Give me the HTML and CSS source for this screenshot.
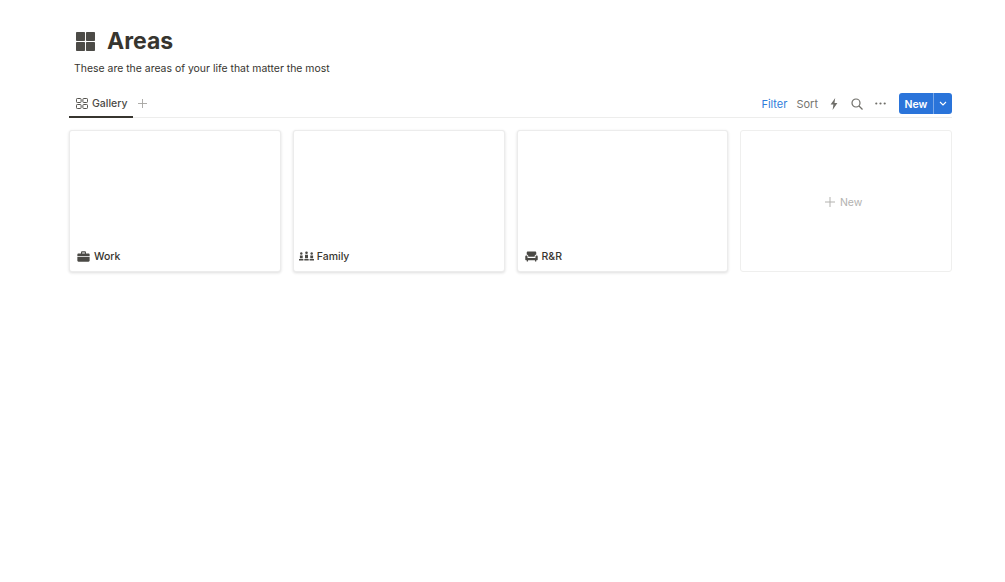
FILE: index.html
```html
<!DOCTYPE html>
<html lang="en">
<head>
<meta charset="utf-8">
<title>Areas</title>
<link rel="stylesheet" href="styles.css">
</head>
<body>
<main class="page">
  <header class="head">
    <svg class="head-icon" viewBox="0 0 20 20"><path d="M.8 0h7.900c.4 0 .8.4.8.8v7.900c0 .4-.4.8-.8.8H.8c-.4 0-.8-.4-.8-.8V.8C0 .4.400 0 .8 0zM11.300 0h7.900c.4 0 .8.4.8.8v7.900c0 .4-.4.8-.8.8h-7.900c-.4 0-.8-.4-.8-.8V.8c0-.4.400-.8.800-.8zM.8 10.500h7.900c.4 0 .8.4.8.8v7.900c0 .4-.4.8-.8.8H.8c-.4 0-.8-.4-.8-.8v-7.900c0-.4.400-.8.800-.8zM11.300 10.500h7.900c.4 0 .8.4.8.8v7.900c0 .4-.4.8-.8.8h-7.900c-.4 0-.8-.4-.8-.8v-7.900c0-.4.400-.8.800-.8z"/></svg>
    <h1 class="title">Areas</h1>
  </header>
  <p class="desc">These are the areas of your life that matter the most</p>
  <nav class="bar">
    <div class="tabs">
      <div class="tab">
        <svg class="tab-icon" viewBox="0 0 12 11"><g fill="none" stroke="#55534e" stroke-width="1"><rect x=".5" y=".5" width="4.600" height="4" rx=".8"/><rect x="6.900" y=".5" width="4.600" height="4" rx=".8"/><rect x=".5" y="6.500" width="4.600" height="4" rx=".8"/><rect x="6.900" y="6.500" width="4.600" height="4" rx=".8"/></g></svg>
        <span>Gallery</span>
      </div>
      <svg class="tab-add" viewBox="0 0 10 10"><path d="M5 0v10M0 5h10" fill="none" stroke="#a5a4a0" stroke-width="1"/></svg>
    </div>
    <div class="tools">
      <span class="tool tool-active">Filter</span>
      <span class="tool tool-sort">Sort</span>
      <svg class="bolt" viewBox="0 0 8 12"><path d="M5.200 0 .6 6.600h2.800L2.600 12l4.800-7H4.500z" fill="#6f6e69"/></svg>
      <svg class="search" viewBox="0 0 12 12"><circle cx="5" cy="5" r="4" fill="none" stroke="#6f6e69" stroke-width="1.200"/><path d="m8 8 3.500 3.500" stroke="#6f6e69" stroke-width="1.300" fill="none"/></svg>
      <svg class="dots" viewBox="0 0 11 3"><circle cx="1.300" cy="1.500" r="1.100"/><circle cx="5.500" cy="1.500" r="1.100"/><circle cx="9.700" cy="1.500" r="1.100"/></svg>
      <div class="new-btn">
        <span class="new-label">New</span>
        <span class="new-arrow"><svg viewBox="0 0 8 5"><path d="m1 1 3 3 3-3" fill="none" stroke="#fff" stroke-width="1.100"/></svg></span>
      </div>
    </div>
  </nav>
  <section class="grid">
    <article class="card">
      <div class="card-name">
        <svg class="card-icon" viewBox="0 0 14 12"><path d="M4.300 2.600V1.700C4.300.8 4.900.4 5.600.4h2.800c.7 0 1.300.4 1.300 1.300v.9H8.500v-.7c0-.2-.1-.4-.4-.4H5.900c-.3 0-.4.200-.4.400v.7zM1.500 2.600h11c.7 0 1.200.5 1.200 1.200v1.900H.3V3.800c0-.7.500-1.200 1.200-1.200zM.3 6.600h13.400v3.700c0 .8-.5 1.300-1.200 1.300h-11c-.7 0-1.200-.5-1.200-1.300z" fill="#4a4945"/></svg>
        <span>Work</span>
      </div>
    </article>
    <article class="card">
      <div class="card-name card-name-tight">
        <svg class="card-icon-wide" viewBox="0 0 15 10"><g fill="#4a4945"><circle cx="2.300" cy="2.500" r="1.200"/><circle cx="7.500" cy="1.700" r="1.300"/><circle cx="12.700" cy="2.500" r="1.200"/><path d="M.9 4.400h2.800v2.900H.9zM6 3.700h3v3.600H6zM11.300 4.400h2.800v2.900h-2.800zM0 8h4.400v1.500H0zM5.300 8h4.400v1.500H5.300zM10.600 8H15v1.500h-4.400z"/></g></svg>
        <span>Family</span>
      </div>
    </article>
    <article class="card">
      <div class="card-name">
        <svg class="card-icon" viewBox="0 0 14 12"><path d="M3 .6h8c.7 0 1.200.5 1.200 1.200v2.100c-1 .1-1.700.8-1.700 1.800v.7h-7v-.7c0-1-.7-1.700-1.700-1.800V1.800C1.800 1.100 2.300.6 3 .6zM1.400 4.800c.8 0 1.300.5 1.300 1.300v1.400h8.600V6.100c0-.8.500-1.300 1.300-1.300s1.200.5 1.200 1.200v3.400c0 .4-.3.700-.7.700h-.9v1.300h-1.400v-1.300H3.200v1.300H1.800v-1.300H.9c-.4 0-.7-.3-.7-.7V6c0-.7.500-1.200 1.200-1.200z" fill="#4a4945"/></svg>
        <span>R&amp;R</span>
      </div>
    </article>
    <article class="card card-new">
      <svg class="new-plus" viewBox="0 0 10 10"><path d="M5 0v10M0 5h10" fill="none" stroke="#b3b2af" stroke-width="1"/></svg>
      <span>New</span>
    </article>
  </section>
</main>
</body>
</html>
```
FILE: styles.css
```css
* { box-sizing: border-box; }
html, body { margin: 0; background: #fff; }
body {
  font-family: Inter, "Liberation Sans", sans-serif;
  color: #37352f;
  height: 582px;
  overflow: hidden;
}
.page { padding: 25px 53px 0 69px; }
.head { display: flex; align-items: center; height: 32px; padding-left: 7px; gap: 12px; }
.head-icon { width: 19px; height: 19px; fill: #4c4b47; flex: none; }
.title { margin: 0; font-size: 23px; line-height: 32px; font-weight: 700; color: #37352f; }
.desc { margin: 3px 0 0 5px; font-size: 10.450px; line-height: 17px; color: #37352f; }
.bar { margin-top: 16px; height: 25px; display: flex; justify-content: space-between; border-bottom: 1px solid #ededec; }
.tabs { display: flex; align-items: flex-start; }
.tab {
  width: 64px; height: 25px; display: flex; align-items: center; gap: 4px;
  padding: 0 0 2px 7px; font-size: 10.500px; font-weight: 500;
  border-bottom: 2px solid #37352f; color: #4a4945;
}
.tab-icon { width: 12px; height: 11px; flex: none; }
.tab-add { width: 9px; height: 9px; margin: 6px 0 0 5px; }
.tools { display: flex; align-items: center; height: 21px; font-size: 11px; }
.tool { color: #76756f; margin-right: 9px; }
.tool-sort { margin-right: 11px; }
.tool-active { color: #2f7ddb; }
.bolt { width: 8px; height: 12px; margin: 0 0 0 1px; }
.search { width: 12px; height: 12px; margin-left: 13px; }
.dots { width: 11px; height: 3px; margin-left: 12px; fill: #6f6e69; }
.new-btn { display: flex; height: 21px; margin-left: 13px; border-radius: 3px; overflow: hidden; background: #2a74da; color: #fff; }
.new-label { width: 34px; padding-top: 1px; line-height: 21px; text-align: center; font-size: 10.500px; font-weight: 600; }
.new-arrow { width: 19px; display: flex; align-items: center; justify-content: center; border-left: 1px solid #7aa8e8; }
.new-arrow svg { width: 8px; height: 5px; }
.grid { margin-top: 12px; display: grid; grid-template-columns: repeat(4, 1fr); gap: 12px; }
.card {
  height: 142px; border-radius: 3px; background: #fff;
  box-shadow: inset 0 0 0 1px rgba(15,15,15,.08), 0 1px 3px rgba(15,15,15,.14);
  display: flex; align-items: flex-end;
}
.card-name { display: flex; align-items: center; gap: 4px; height: 16px; margin: 0 0 8px 8px; font-size: 10.500px; font-weight: 500; color: #37352f; }
.card-name-tight { margin-left: 6px; gap: 3px; }
.card-icon { width: 13px; height: 11px; flex: none; }
.card-icon-wide { width: 15px; height: 10px; flex: none; }
.card-new {
  box-shadow: none; border: 1px solid #efefee; align-items: center; justify-content: center;
  gap: 5px; color: #b3b2af; font-size: 10.500px; padding: 2px 5px 0 0;
}
.new-plus { width: 10px; height: 10px; }
```
